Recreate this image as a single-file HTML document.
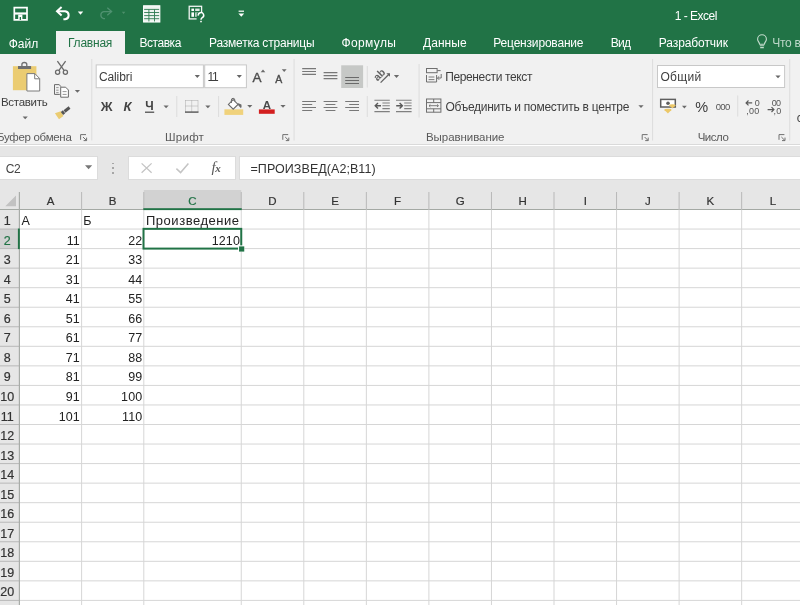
<!DOCTYPE html>
<html lang="ru"><head><meta charset="utf-8"><title>1 - Excel</title>
<style>
html,body{margin:0;padding:0}
body{width:800px;height:605px;overflow:hidden;position:relative;background:#fff;font-family:"Liberation Sans",sans-serif;}
div,span,svg{position:absolute;box-sizing:border-box}
.t{white-space:nowrap;line-height:1;display:block}
</style></head><body>
<div id="root" style="left:0;top:0;width:800px;height:605px;overflow:hidden;will-change:transform">

<div style="left:0;top:0;width:800px;height:54.3px;background:#217346"></div>
<div style="left:0;top:54.3px;width:800px;height:90px;background:#f1f1f1"></div>
<div style="left:0;top:143.8px;width:800px;height:1.7px;background:#dadada"></div>
<div style="left:0;top:145.5px;width:800px;height:64px;background:#e6e6e6"></div>
<div style="left:55.8px;top:31px;width:69.4px;height:25px;background:#f1f1f1"></div>
<svg style="left:0;top:0" width="800" height="55" viewBox="0 0 800 55" fill="none" stroke-linecap="butt">
<!-- save -->
<path d="M14.3 7.6 H27 V19.9 H14.3 Z" stroke="#fff" stroke-width="1.7"/>
<rect x="14.3" y="12.4" width="12.7" height="2.2" fill="#fff"/>
<rect x="18.2" y="14.6" width="4.2" height="5.3" fill="#fff"/>
<rect x="19.7" y="17" width="1.3" height="2.9" fill="#217346"/>
<!-- undo -->
<path d="M61.6 6.9 L57 11.2 L61.6 15.4" stroke="#fff" stroke-width="2"/>
<path d="M57.4 11.2 H65.2 A4.1 4.1 0 0 1 65.2 19.3 H63.4" stroke="#fff" stroke-width="2"/>
<path d="M77.8 11.6 h5.4 l-2.7 3.2 z" fill="#fff"/>
<!-- redo (disabled) -->
<path d="M107.3 7.8 L111.6 11.6 L107.3 15.2" stroke="#4f9170" stroke-width="1.3"/>
<path d="M111.4 11.6 H103.6 A3.6 3.6 0 0 0 103.6 18.6 H105" stroke="#4f9170" stroke-width="1.3"/>
<path d="M121.8 11.8 h3.6 l-1.8 2.2 z" fill="#4d8f6b"/>
<!-- table -->
<rect x="143.6" y="5.8" width="16.2" height="16.2" fill="#eef4f0"/>
<path d="M143.6 9.4 H159.8 M143.6 12.5 H159.8 M143.6 15.6 H159.8 M143.6 18.7 H159.8 M148.9 9.4 V22 M154.5 9.4 V22" stroke="#2d7a50" stroke-width="0.9"/>
<rect x="143.6" y="5.8" width="16.2" height="16.2" stroke="#fff" stroke-width="1.1"/>
<!-- form -->
<rect x="189.2" y="6.3" width="12.4" height="12.6" stroke="#f0f5f2" stroke-width="1.3"/>
<rect x="191.4" y="8.6" width="2.6" height="2.4" fill="#fff"/><rect x="195.2" y="8.6" width="4.4" height="2.4" fill="#dfeae3"/>
<rect x="191.4" y="12.4" width="2.6" height="4.4" fill="#fff"/><rect x="195.2" y="12.4" width="3" height="4.4" fill="#dfeae3"/>
<rect x="196.6" y="12.6" width="9" height="10" fill="#217346"/>
<path d="M198.3 15.6 A2.7 2.7 0 1 1 202.6 17.4 Q201 18.4 201 19.8" stroke="#fff" stroke-width="1.5"/>
<rect x="200.2" y="20.8" width="1.6" height="1.5" fill="#fff"/>
<!-- customize -->
<rect x="238.6" y="10.6" width="5.4" height="1.2" fill="#fff"/>
<path d="M238.4 13.4 h5.8 l-2.9 3.3 z" fill="#fff"/>
<!-- bulb -->
<path d="M759.6 44.2 C759.4 42.2 757.6 41.4 757.6 39.2 A4.4 4.4 0 0 1 766.4 39.2 C766.4 41.4 764.6 42.2 764.4 44.2 Z" stroke="#c3dccd" stroke-width="1.1"/>
<path d="M759.8 45.8 H764.2 M760.2 47.6 H763.8" stroke="#c3dccd" stroke-width="1.1"/>
</svg>

<svg style="left:0;top:55px" width="800" height="90" viewBox="0 55 800 90" fill="none">
<!-- group separators -->
<g fill="#dcdcdc">
<rect x="91.3" y="59" width="1" height="81.5"/><rect x="293.6" y="59" width="1" height="81.5"/>
<rect x="652.1" y="59" width="1" height="81.5"/><rect x="789.2" y="59" width="1" height="81.5"/>
<rect x="418.6" y="64" width="1" height="53.5"/>
<rect x="176.3" y="96" width="1" height="21"/><rect x="218.1" y="96" width="1" height="21"/>
<rect x="366.8" y="66" width="1" height="21.5"/><rect x="366.8" y="96" width="1" height="21"/>
<rect x="737.2" y="95.5" width="1" height="21"/>
</g>
<!-- paste -->
<rect x="12.9" y="66.2" width="23.5" height="24" fill="#ebcc72"/>
<rect x="18" y="66" width="13.1" height="3" fill="#6f6f6f"/>
<path d="M21.9 66.4 V64.6 A2.45 2.1 0 0 1 26.8 64.6 V66.4" stroke="#6f6f6f" stroke-width="1.3"/>
<path d="M26.9 73.6 H34.9 L39.7 78.6 V91 H26.9 Z" fill="#fff" stroke="#7a7a7a" stroke-width="1"/>
<path d="M34.7 73.8 V78.8 H39.6" stroke="#7a7a7a" stroke-width="1"/>
<path d="M22.6 116.5 h5.2 l-2.6 2.8 z" fill="#6a6a6a"/>
<!-- scissors -->
<g stroke="#6a6a6a" stroke-width="1.3">
<path d="M57.4 61.2 L64.2 70.6 M65.6 61.2 L58.8 70.6"/>
<circle cx="57.6" cy="72.2" r="2.1"/><circle cx="65.4" cy="72.2" r="2.1"/>
</g>
<!-- copy -->
<g stroke="#6a6a6a" stroke-width="1">
<path d="M59.8 94.4 H54.5 V84.6 H59 L61.3 86.8" />
<path d="M60.7 87.2 H65.6 L68.4 90 V97.2 H60.7 Z" fill="#fff"/>
<path d="M56.2 87.6 H58.6 M56.2 90.2 H58.6 M56.2 92.6 H58.6 M62.6 91.6 H66.6 M62.6 94.4 H66.6" stroke="#8a8a8a" stroke-width="0.9"/>
</g>
<path d="M74.8 90 h5.2 l-2.6 2.8 z" fill="#6a6a6a"/>
<!-- format painter -->
<path d="M54.9 113.2 L60.8 111.2 L63.4 116 L59 119.2 Z" fill="#ebcc72"/>
<g transform="translate(65.6 110.6) rotate(-38)">
<rect x="-4.6" y="-1.9" width="2.6" height="3.8" fill="#555"/>
<rect x="-1.4" y="-1.5" width="6.4" height="3" fill="#555"/>
</g>
<!-- launchers -->
<g stroke="#707070" stroke-width="1" transform="translate(0.0 0)"><path d="M86 134.6 H80.6 V139.8"/><path d="M83 137 L86.4 140.4 M86.6 137.6 V140.6 H83.6"/></g>
<g stroke="#707070" stroke-width="1" transform="translate(202.2 0)"><path d="M86 134.6 H80.6 V139.8"/><path d="M83 137 L86.4 140.4 M86.6 137.6 V140.6 H83.6"/></g>
<g stroke="#707070" stroke-width="1" transform="translate(561.6 0)"><path d="M86 134.6 H80.6 V139.8"/><path d="M83 137 L86.4 140.4 M86.6 137.6 V140.6 H83.6"/></g>
<g stroke="#707070" stroke-width="1" transform="translate(698.4 0)"><path d="M86 134.6 H80.6 V139.8"/><path d="M83 137 L86.4 140.4 M86.6 137.6 V140.6 H83.6"/></g>
<!-- font combos -->
<rect x="96.2" y="64.9" width="107.2" height="22.8" fill="#fff" stroke="#c8c8c8" stroke-width="1"/>
<rect x="204.7" y="64.9" width="41.7" height="22.8" fill="#fff" stroke="#c8c8c8" stroke-width="1"/>
<path d="M194.7 75.1 h5.2 l-2.6 2.8 z M236.7 75.1 h5.2 l-2.6 2.8 z" fill="#666"/>
<!-- grow/shrink arrows -->
<path d="M260.7 72.3 h4.6 l-2.3 -2.8 z" fill="#6a6a6a"/>
<path d="M281.8 69.2 h4.8 l-2.4 2.8 z" fill="#6a6a6a"/>
<!-- underline for Ч + arrow -->
<rect x="145" y="111.6" width="9.2" height="1.2" fill="#444"/>
<path d="M163.5 105.4 h5.2 l-2.6 2.8 z" fill="#6a6a6a"/>
<!-- borders icon -->
<g stroke="#a8a8a8" stroke-width="1" stroke-dasharray="1 1">
<path d="M185.5 100.5 H198 M185.5 100.5 V112 M198 100.5 V112 M191.7 100.5 V112 M185.5 106 H198"/>
</g>
<rect x="185" y="111.4" width="13.5" height="1.4" fill="#555"/>
<path d="M205.3 105.4 h5.2 l-2.6 2.8 z" fill="#6a6a6a"/>
<!-- fill bucket -->
<rect x="224.4" y="109.3" width="18.8" height="5.6" fill="#f0d27c"/>
<path d="M233.2 99.6 L238 104.4 L233.2 109.2 L228.4 104.4 Z" fill="#fff" stroke="#6a6a6a" stroke-width="1.1"/>
<path d="M231.4 103 V100 A1.7 1.7 0 0 1 234.8 100 V101.2" stroke="#6a6a6a" stroke-width="1"/>
<path d="M237.6 103 L241.4 104.6 Q242 106.6 241 108.2 L238.4 105.6 Z" fill="#6a6a6a"/>
<path d="M247.2 105 h5.2 l-2.6 2.8 z" fill="#6a6a6a"/>
<!-- font color -->
<rect x="258.9" y="109.4" width="15.8" height="4.4" fill="#d31f1f"/>
<path d="M280.4 105 h5.2 l-2.6 2.8 z" fill="#6a6a6a"/>
<!-- align: top row -->
<g stroke="#787878" stroke-width="1.1">
<path d="M302.2 68.6 H316 M302.2 71.5 H316 M302.2 74.4 H316"/>
<path d="M323.6 72.6 H337.4 M323.6 75.6 H337.4 M323.6 78.6 H337.4"/>
</g>
<rect x="341.2" y="65.3" width="21.9" height="22.7" fill="#c6c8c6"/>
<path d="M345.2 77.5 H359 M345.2 80.5 H359 M345.2 83.5 H359" stroke="#6a6a6a" stroke-width="1.1"/>
<!-- align: bottom row -->
<g stroke="#787878" stroke-width="1.1">
<path d="M302.2 101.5 H316 M302.2 104.5 H312.2 M302.2 107.5 H316 M302.2 110.5 H312.2"/>
<path d="M323.6 101.5 H337.4 M325.6 104.5 H335.4 M323.6 107.5 H337.4 M325.6 110.5 H335.4"/>
<path d="M345.2 101.5 H359 M349.2 104.5 H359 M345.2 107.5 H359 M349.2 110.5 H359"/>
</g>
<!-- orientation -->
<g transform="translate(379.6 75.2) rotate(-45)">
<text x="-6" y="3" font-family="Liberation Sans, sans-serif" font-size="10.5" font-weight="bold" fill="#636363">ab</text>
</g>
<path d="M380.6 82.6 L389.2 74" stroke="#636363" stroke-width="1.3"/>
<path d="M386.4 73.2 H390 V76.8 Z" fill="#636363"/>
<path d="M393.9 75.1 h5.2 l-2.6 2.8 z" fill="#6a6a6a"/>
<!-- indents -->
<g stroke="#808080" stroke-width="1.1">
<path d="M374.4 100.2 H389.8 M382.4 103 H389.8 M382.4 105.8 H389.8 M382.4 108.6 H389.8 M374.4 111.6 H389.8"/>
<path d="M396 100.2 H411.6 M404.2 103 H411.6 M404.2 105.8 H411.6 M404.2 108.6 H411.6 M396 111.6 H411.6"/>
</g>
<g stroke="#5a5a5a" stroke-width="1.4">
<path d="M375.2 105.8 H381 M378 103 L375.2 105.8 L378 108.6"/>
<path d="M396.2 105.8 H402.4 M399.6 103 L402.4 105.8 L399.6 108.6"/>
</g>
<!-- wrap text -->
<g stroke="#6f6f6f" stroke-width="1">
<rect x="426.5" y="68.5" width="10.6" height="4.2"/>
<path d="M437.2 70.6 H440.6"/>
<path d="M426.5 75 V82 H436.6 V75"/>
<path d="M428.6 77 H434.4 M428.6 79.6 H434.4" stroke-width="0.9"/>
<path d="M441.2 74 V78 H437.6 M439.2 76.4 L437.4 78 L439.2 79.8" />
</g>
<!-- merge -->
<g stroke="#6f6f6f" stroke-width="1">
<rect x="426.5" y="99" width="14.4" height="13.2"/>
<path d="M426.5 102.6 H441 M426.5 108.8 H441 M433.7 99 V102.6 M433.7 108.8 V112.2"/>
<path d="M429 105.7 H438.4 M430.4 104.4 L429 105.7 L430.4 107 M437 104.4 L438.4 105.7 L437 107" stroke-width="0.9"/>
</g>
<path d="M638.4 105.2 h5.2 l-2.6 2.8 z" fill="#6a6a6a"/>
<!-- number format combo -->
<rect x="657.5" y="65.5" width="127.1" height="22" fill="#fff" stroke="#c8c8c8" stroke-width="1"/>
<path d="M775.4 75.4 h5.2 l-2.6 2.8 z" fill="#666"/>
<!-- currency -->
<rect x="660.7" y="99.4" width="14.6" height="7.6" fill="#fff" stroke="#5e5e5e" stroke-width="1.5"/>
<circle cx="668" cy="103.2" r="1.8" fill="#5e5e5e"/>
<path d="M669.4 105.2 h6 l-3 3.2 z" fill="#ecc868"/><ellipse cx="672.4" cy="105.4" rx="3.2" ry="1.2" fill="#ecc868"/>
<path d="M664.4 109.8 h7 l-3.5 3.8 z" fill="#ecc868"/><ellipse cx="667.9" cy="110" rx="3.6" ry="1.3" fill="#ecc868"/>
<path d="M682 105.8 h4.8 l-2.4 2.6 z" fill="#6a6a6a"/>
<!-- decimals -->
<g stroke="#5a5a5a" stroke-width="1.2">
<path d="M746 102.9 H752.2 M748.5 100.5 L746.1 102.9 L748.5 105.3"/>
<path d="M767.6 109.6 H773.8 M771.5 107.2 L773.9 109.6 L771.5 112"/>
</g>
</svg>

<div style="left:0;top:155.6px;width:98px;height:24.8px;background:#fff;border:1px solid #dcdcdc;border-left:0"></div>
<svg style="left:80px;top:160px" width="20" height="14" viewBox="80 160 20 14"><path d="M85 165.2 h7.2 l-3.6 4 z" fill="#777"/></svg>
<div style="left:112.3px;top:162.5px;width:1.5px;height:1.5px;background:#a6a6a6"></div>
<div style="left:112.3px;top:167.4px;width:1.5px;height:1.5px;background:#a6a6a6"></div>
<div style="left:112.3px;top:172.3px;width:1.5px;height:1.5px;background:#a6a6a6"></div>
<div style="left:128.2px;top:155.6px;width:107.8px;height:24.8px;background:#fff;border:1px solid #dcdcdc"></div>
<div style="left:239px;top:155.6px;width:570px;height:24.8px;background:#fff;border:1px solid #dcdcdc"></div>
<svg style="left:0;top:150px" width="800" height="40" viewBox="0 150 800 40" fill="none">
<path d="M141.6 163.4 L151.6 172.8 M151.6 163.4 L141.6 172.8" stroke="#c4c4c4" stroke-width="1.3"/>
<path d="M176.4 168.6 L180.6 172.6 L188.4 163.6" stroke="#c4c4c4" stroke-width="1.5"/>
</svg>
<span class="t" style="left:211.6px;top:160px;font-family:'Liberation Serif',serif;font-style:italic;font-size:15px;color:#5a5a5a;letter-spacing:0px">f<span style="position:static;font-size:11px;font-weight:bold;margin-left:-0.5px">x</span></span>

<svg style="left:0;top:0" width="800" height="605" viewBox="0 0 800 605">
<rect x="143.80" y="190" width="97.45" height="19.5" fill="#d2d2d2"/>
<rect x="0" y="209.50" width="19.4" height="400" fill="#e6e6e6"/>
<rect x="0" y="229.05" width="19.4" height="19.55" fill="#d2d2d2"/>
<rect x="0" y="209.00" width="800" height="1" fill="#a4a9a4"/>
<rect x="19.4" y="228.55" width="800" height="1" fill="#d6d6d6"/>
<rect x="0" y="228.55" width="19.4" height="1" fill="#b8b8b8"/>
<rect x="19.4" y="248.09" width="800" height="1" fill="#d6d6d6"/>
<rect x="0" y="248.09" width="19.4" height="1" fill="#b8b8b8"/>
<rect x="19.4" y="267.63" width="800" height="1" fill="#d6d6d6"/>
<rect x="0" y="267.63" width="19.4" height="1" fill="#b8b8b8"/>
<rect x="19.4" y="287.18" width="800" height="1" fill="#d6d6d6"/>
<rect x="0" y="287.18" width="19.4" height="1" fill="#b8b8b8"/>
<rect x="19.4" y="306.73" width="800" height="1" fill="#d6d6d6"/>
<rect x="0" y="306.73" width="19.4" height="1" fill="#b8b8b8"/>
<rect x="19.4" y="326.27" width="800" height="1" fill="#d6d6d6"/>
<rect x="0" y="326.27" width="19.4" height="1" fill="#b8b8b8"/>
<rect x="19.4" y="345.81" width="800" height="1" fill="#d6d6d6"/>
<rect x="0" y="345.81" width="19.4" height="1" fill="#b8b8b8"/>
<rect x="19.4" y="365.36" width="800" height="1" fill="#d6d6d6"/>
<rect x="0" y="365.36" width="19.4" height="1" fill="#b8b8b8"/>
<rect x="19.4" y="384.91" width="800" height="1" fill="#d6d6d6"/>
<rect x="0" y="384.91" width="19.4" height="1" fill="#b8b8b8"/>
<rect x="19.4" y="404.45" width="800" height="1" fill="#d6d6d6"/>
<rect x="0" y="404.45" width="19.4" height="1" fill="#b8b8b8"/>
<rect x="19.4" y="424.00" width="800" height="1" fill="#d6d6d6"/>
<rect x="0" y="424.00" width="19.4" height="1" fill="#b8b8b8"/>
<rect x="19.4" y="443.54" width="800" height="1" fill="#d6d6d6"/>
<rect x="0" y="443.54" width="19.4" height="1" fill="#b8b8b8"/>
<rect x="19.4" y="463.09" width="800" height="1" fill="#d6d6d6"/>
<rect x="0" y="463.09" width="19.4" height="1" fill="#b8b8b8"/>
<rect x="19.4" y="482.63" width="800" height="1" fill="#d6d6d6"/>
<rect x="0" y="482.63" width="19.4" height="1" fill="#b8b8b8"/>
<rect x="19.4" y="502.18" width="800" height="1" fill="#d6d6d6"/>
<rect x="0" y="502.18" width="19.4" height="1" fill="#b8b8b8"/>
<rect x="19.4" y="521.72" width="800" height="1" fill="#d6d6d6"/>
<rect x="0" y="521.72" width="19.4" height="1" fill="#b8b8b8"/>
<rect x="19.4" y="541.27" width="800" height="1" fill="#d6d6d6"/>
<rect x="0" y="541.27" width="19.4" height="1" fill="#b8b8b8"/>
<rect x="19.4" y="560.81" width="800" height="1" fill="#d6d6d6"/>
<rect x="0" y="560.81" width="19.4" height="1" fill="#b8b8b8"/>
<rect x="19.4" y="580.36" width="800" height="1" fill="#d6d6d6"/>
<rect x="0" y="580.36" width="19.4" height="1" fill="#b8b8b8"/>
<rect x="19.4" y="599.90" width="800" height="1" fill="#d6d6d6"/>
<rect x="0" y="599.90" width="19.4" height="1" fill="#b8b8b8"/>
<rect x="81.10" y="209.50" width="1" height="400" fill="#d6d6d6"/>
<rect x="81.10" y="192" width="1" height="17.5" fill="#b8b8b8"/>
<rect x="143.30" y="209.50" width="1" height="400" fill="#d6d6d6"/>
<rect x="143.30" y="192" width="1" height="17.5" fill="#b8b8b8"/>
<rect x="240.75" y="209.50" width="1" height="400" fill="#d6d6d6"/>
<rect x="240.75" y="192" width="1" height="17.5" fill="#b8b8b8"/>
<rect x="303.30" y="209.50" width="1" height="400" fill="#d6d6d6"/>
<rect x="303.30" y="192" width="1" height="17.5" fill="#b8b8b8"/>
<rect x="365.85" y="209.50" width="1" height="400" fill="#d6d6d6"/>
<rect x="365.85" y="192" width="1" height="17.5" fill="#b8b8b8"/>
<rect x="428.40" y="209.50" width="1" height="400" fill="#d6d6d6"/>
<rect x="428.40" y="192" width="1" height="17.5" fill="#b8b8b8"/>
<rect x="490.95" y="209.50" width="1" height="400" fill="#d6d6d6"/>
<rect x="490.95" y="192" width="1" height="17.5" fill="#b8b8b8"/>
<rect x="553.50" y="209.50" width="1" height="400" fill="#d6d6d6"/>
<rect x="553.50" y="192" width="1" height="17.5" fill="#b8b8b8"/>
<rect x="616.05" y="209.50" width="1" height="400" fill="#d6d6d6"/>
<rect x="616.05" y="192" width="1" height="17.5" fill="#b8b8b8"/>
<rect x="678.60" y="209.50" width="1" height="400" fill="#d6d6d6"/>
<rect x="678.60" y="192" width="1" height="17.5" fill="#b8b8b8"/>
<rect x="741.15" y="209.50" width="1" height="400" fill="#d6d6d6"/>
<rect x="741.15" y="192" width="1" height="17.5" fill="#b8b8b8"/>
<rect x="18.8" y="192" width="1.2" height="420" fill="#a8aca8"/>
<polygon points="16,195.5 16,206.2 5.3,206.2" fill="#c2c2c2"/>
<rect x="143.30" y="208.2" width="98.45" height="1.9" fill="#217346"/>
<rect x="17.9" y="228.55" width="1.9" height="20.55" fill="#217346"/>
<rect x="143.50" y="228.85" width="97.75" height="19.74" fill="none" stroke="#217346" stroke-width="2"/>
<rect x="238.05" y="245.39" width="6.4" height="6.4" fill="#fff"/>
<rect x="239.05" y="246.39" width="5.2" height="5.2" fill="#217346"/>
</svg>
<span class="t" id="tab0" style="left:8.70px;top:38.00px;font-size:12px;color:#fff;letter-spacing:-0.015px;">Файл</span>
<span class="t" id="tab1" style="left:68.00px;top:37.00px;font-size:12px;color:#217346;letter-spacing:-0.218px;">Главная</span>
<span class="t" id="tab2" style="left:139.50px;top:37.00px;font-size:12px;color:#fff;letter-spacing:-0.458px;">Вставка</span>
<span class="t" id="tab3" style="left:209.00px;top:37.00px;font-size:12px;color:#fff;letter-spacing:-0.203px;">Разметка страницы</span>
<span class="t" id="tab4" style="left:341.55px;top:37.00px;font-size:12px;color:#fff;letter-spacing:0.351px;">Формулы</span>
<span class="t" id="tab5" style="left:423.00px;top:37.00px;font-size:12px;color:#fff;letter-spacing:0.050px;">Данные</span>
<span class="t" id="tab6" style="left:493.30px;top:37.00px;font-size:12px;color:#fff;letter-spacing:-0.186px;">Рецензирование</span>
<span class="t" id="tab7" style="left:610.80px;top:37.00px;font-size:12px;color:#fff;letter-spacing:-0.700px;">Вид</span>
<span class="t" id="tab8" style="left:658.80px;top:37.00px;font-size:12px;color:#fff;letter-spacing:-0.090px;">Разработчик</span>
<span class="t" id="tab9" style="left:772.30px;top:37.00px;font-size:12px;color:#bcd7c8;letter-spacing:-0.300px;">Что вы</span>
<span class="t" id="title" style="left:674.80px;top:10.00px;font-size:12px;color:#fff;letter-spacing:-0.517px;">1 - Excel</span>
<span class="t" id="paste" style="left:0.95px;top:97.00px;font-size:11.5px;color:#3e3e3e;letter-spacing:-0.277px;">Вставить</span>
<span class="t" id="g1" style="left:-3.05px;top:132.00px;font-size:11.5px;color:#5a5a5a;letter-spacing:-0.300px;">Буфер обмена</span>
<span class="t" id="g2" style="left:165.00px;top:132.00px;font-size:11.5px;color:#5a5a5a;letter-spacing:0.261px;">Шрифт</span>
<span class="t" id="g3" style="left:426.00px;top:132.00px;font-size:11.5px;color:#5a5a5a;letter-spacing:-0.068px;">Выравнивание</span>
<span class="t" id="g4" style="left:697.65px;top:132.00px;font-size:11.5px;color:#5a5a5a;letter-spacing:-0.459px;">Число</span>
<span class="t" id="calibri" style="left:98.90px;top:71.00px;font-size:12px;color:#3e3e3e;letter-spacing:-0.093px;">Calibri</span>
<span class="t" id="fs11" style="left:207.60px;top:71.00px;font-size:12px;color:#3e3e3e;letter-spacing:-1.450px;">11</span>
<span class="t" id="wrap" style="left:445.15px;top:71.00px;font-size:12px;color:#3e3e3e;letter-spacing:-0.359px;">Перенести текст</span>
<span class="t" id="merge" style="left:445.40px;top:101.00px;font-size:12px;color:#3e3e3e;letter-spacing:-0.264px;">Объединить и поместить в центре</span>
<span class="t" id="numfmt" style="left:660.40px;top:71.00px;font-size:12px;color:#3e3e3e;letter-spacing:0.327px;">Общий</span>
<span class="t" id="bB" style="left:100.70px;top:100.00px;font-size:13px;color:#444;font-weight:bold;">Ж</span>
<span class="t" id="bI" style="left:123.40px;top:100.00px;font-size:13px;color:#444;font-weight:bold;font-style:italic;">К</span>
<span class="t" id="bU" style="left:145.20px;top:100.00px;font-size:12px;color:#444;font-weight:bold;">Ч</span>
<span class="t" id="pct" style="left:695.35px;top:100.00px;font-size:14.5px;color:#3c3c3c;">%</span>
<span class="t" id="k000" style="left:715.65px;top:102.00px;font-size:9.5px;color:#555;letter-spacing:-0.600px;">000</span>
<span class="t" id="d1a" style="left:754.65px;top:99.00px;font-size:9px;color:#555;">0</span>
<span class="t" id="d1b" style="left:746.25px;top:107.00px;font-size:9px;color:#555;letter-spacing:0.300px;">,00</span>
<span class="t" id="d2a" style="left:771.75px;top:99.00px;font-size:9px;color:#555;letter-spacing:-0.800px;">00</span>
<span class="t" id="d2b" style="left:773.45px;top:107.00px;font-size:9px;color:#555;letter-spacing:0.250px;">,0</span>
<span class="t" id="gA" style="left:252.60px;top:71.00px;font-size:13.5px;color:#4a4a4a;-webkit-text-stroke:0.35px #4a4a4a;">A</span>
<span class="t" id="sA" style="left:275.30px;top:74.00px;font-size:10.5px;color:#4a4a4a;-webkit-text-stroke:0.35px #4a4a4a;">A</span>
<span class="t" id="fA" style="left:262.65px;top:100.00px;font-size:11.5px;color:#4a4a4a;font-weight:bold;">A</span>
<span class="t" id="cut" style="left:796.70px;top:112.00px;font-size:12px;color:#444;letter-spacing:-0.300px;">с</span>
<span class="t" id="nb" style="left:5.75px;top:163.00px;font-size:12px;color:#444;letter-spacing:-0.500px;">C2</span>
<span class="t" id="formula" style="left:250.50px;top:163.00px;font-size:12.5px;color:#333;letter-spacing:0.062px;">=ПРОИЗВЕД(A2;B11)</span>
<span class="t" id="chA" style="left:30.50px;top:196.00px;width:40px;text-align:center;font-size:11.5px;color:#333;-webkit-text-stroke:0.2px #333;">A</span>
<span class="t" id="chB" style="left:92.70px;top:196.00px;width:40px;text-align:center;font-size:11.5px;color:#333;-webkit-text-stroke:0.2px #333;">B</span>
<span class="t" id="chC" style="left:172.53px;top:196.00px;width:40px;text-align:center;font-size:11.5px;color:#217346;-webkit-text-stroke:0.2px #217346;">C</span>
<span class="t" id="chD" style="left:252.52px;top:196.00px;width:40px;text-align:center;font-size:11.5px;color:#333;-webkit-text-stroke:0.2px #333;">D</span>
<span class="t" id="chE" style="left:315.08px;top:196.00px;width:40px;text-align:center;font-size:11.5px;color:#333;-webkit-text-stroke:0.2px #333;">E</span>
<span class="t" id="chF" style="left:377.62px;top:196.00px;width:40px;text-align:center;font-size:11.5px;color:#333;-webkit-text-stroke:0.2px #333;">F</span>
<span class="t" id="chG" style="left:440.17px;top:196.00px;width:40px;text-align:center;font-size:11.5px;color:#333;-webkit-text-stroke:0.2px #333;">G</span>
<span class="t" id="chH" style="left:502.73px;top:196.00px;width:40px;text-align:center;font-size:11.5px;color:#333;-webkit-text-stroke:0.2px #333;">H</span>
<span class="t" id="chI" style="left:565.27px;top:196.00px;width:40px;text-align:center;font-size:11.5px;color:#333;-webkit-text-stroke:0.2px #333;">I</span>
<span class="t" id="chJ" style="left:627.83px;top:196.00px;width:40px;text-align:center;font-size:11.5px;color:#333;-webkit-text-stroke:0.2px #333;">J</span>
<span class="t" id="chK" style="left:690.38px;top:196.00px;width:40px;text-align:center;font-size:11.5px;color:#333;-webkit-text-stroke:0.2px #333;">K</span>
<span class="t" id="chL" style="left:752.92px;top:196.00px;width:40px;text-align:center;font-size:11.5px;color:#333;-webkit-text-stroke:0.2px #333;">L</span>
<span class="t" id="rh1" style="left:-12.70px;top:215.00px;width:40px;text-align:center;font-size:12.5px;color:#333;-webkit-text-stroke:0.2px #333;">1</span>
<span class="t" id="rh2" style="left:-12.70px;top:235.00px;width:40px;text-align:center;font-size:12.5px;color:#217346;-webkit-text-stroke:0.2px #217346;">2</span>
<span class="t" id="rh3" style="left:-12.70px;top:254.00px;width:40px;text-align:center;font-size:12.5px;color:#333;-webkit-text-stroke:0.2px #333;">3</span>
<span class="t" id="rh4" style="left:-12.70px;top:274.00px;width:40px;text-align:center;font-size:12.5px;color:#333;-webkit-text-stroke:0.2px #333;">4</span>
<span class="t" id="rh5" style="left:-12.70px;top:293.00px;width:40px;text-align:center;font-size:12.5px;color:#333;-webkit-text-stroke:0.2px #333;">5</span>
<span class="t" id="rh6" style="left:-12.70px;top:313.00px;width:40px;text-align:center;font-size:12.5px;color:#333;-webkit-text-stroke:0.2px #333;">6</span>
<span class="t" id="rh7" style="left:-12.70px;top:332.00px;width:40px;text-align:center;font-size:12.5px;color:#333;-webkit-text-stroke:0.2px #333;">7</span>
<span class="t" id="rh8" style="left:-12.70px;top:352.00px;width:40px;text-align:center;font-size:12.5px;color:#333;-webkit-text-stroke:0.2px #333;">8</span>
<span class="t" id="rh9" style="left:-12.70px;top:371.00px;width:40px;text-align:center;font-size:12.5px;color:#333;-webkit-text-stroke:0.2px #333;">9</span>
<span class="t" id="rh10" style="left:-12.70px;top:391.00px;width:40px;text-align:center;font-size:12.5px;color:#333;-webkit-text-stroke:0.2px #333;">10</span>
<span class="t" id="rh11" style="left:-12.70px;top:411.00px;width:40px;text-align:center;font-size:12.5px;color:#333;-webkit-text-stroke:0.2px #333;">11</span>
<span class="t" id="rh12" style="left:-12.70px;top:430.00px;width:40px;text-align:center;font-size:12.5px;color:#333;-webkit-text-stroke:0.2px #333;">12</span>
<span class="t" id="rh13" style="left:-12.70px;top:450.00px;width:40px;text-align:center;font-size:12.5px;color:#333;-webkit-text-stroke:0.2px #333;">13</span>
<span class="t" id="rh14" style="left:-12.70px;top:469.00px;width:40px;text-align:center;font-size:12.5px;color:#333;-webkit-text-stroke:0.2px #333;">14</span>
<span class="t" id="rh15" style="left:-12.70px;top:489.00px;width:40px;text-align:center;font-size:12.5px;color:#333;-webkit-text-stroke:0.2px #333;">15</span>
<span class="t" id="rh16" style="left:-12.70px;top:508.00px;width:40px;text-align:center;font-size:12.5px;color:#333;-webkit-text-stroke:0.2px #333;">16</span>
<span class="t" id="rh17" style="left:-12.70px;top:528.00px;width:40px;text-align:center;font-size:12.5px;color:#333;-webkit-text-stroke:0.2px #333;">17</span>
<span class="t" id="rh18" style="left:-12.70px;top:547.00px;width:40px;text-align:center;font-size:12.5px;color:#333;-webkit-text-stroke:0.2px #333;">18</span>
<span class="t" id="rh19" style="left:-12.70px;top:567.00px;width:40px;text-align:center;font-size:12.5px;color:#333;-webkit-text-stroke:0.2px #333;">19</span>
<span class="t" id="rh20" style="left:-12.70px;top:586.00px;width:40px;text-align:center;font-size:12.5px;color:#333;-webkit-text-stroke:0.2px #333;">20</span>
<span class="t" id="cA1" style="left:21.40px;top:215.00px;font-size:12.5px;color:#222;">А</span>
<span class="t" id="cB1" style="left:83.35px;top:215.00px;font-size:12.5px;color:#222;">Б</span>
<span class="t" id="cC1" style="left:146.00px;top:214.00px;font-size:13px;color:#222;letter-spacing:0.523px;">Произведение</span>
<span class="t" id="cA2" style="left:19.90px;top:235.00px;width:60px;text-align:right;font-size:12.5px;color:#222;letter-spacing:0.12px;">11</span>
<span class="t" id="cB2" style="left:82.30px;top:235.00px;width:60px;text-align:right;font-size:12.5px;color:#222;letter-spacing:0.12px;">22</span>
<span class="t" id="cA3" style="left:19.90px;top:254.00px;width:60px;text-align:right;font-size:12.5px;color:#222;letter-spacing:0.12px;">21</span>
<span class="t" id="cB3" style="left:82.30px;top:254.00px;width:60px;text-align:right;font-size:12.5px;color:#222;letter-spacing:0.12px;">33</span>
<span class="t" id="cA4" style="left:19.90px;top:274.00px;width:60px;text-align:right;font-size:12.5px;color:#222;letter-spacing:0.12px;">31</span>
<span class="t" id="cB4" style="left:82.30px;top:274.00px;width:60px;text-align:right;font-size:12.5px;color:#222;letter-spacing:0.12px;">44</span>
<span class="t" id="cA5" style="left:19.90px;top:293.00px;width:60px;text-align:right;font-size:12.5px;color:#222;letter-spacing:0.12px;">41</span>
<span class="t" id="cB5" style="left:82.30px;top:293.00px;width:60px;text-align:right;font-size:12.5px;color:#222;letter-spacing:0.12px;">55</span>
<span class="t" id="cA6" style="left:19.90px;top:313.00px;width:60px;text-align:right;font-size:12.5px;color:#222;letter-spacing:0.12px;">51</span>
<span class="t" id="cB6" style="left:82.30px;top:313.00px;width:60px;text-align:right;font-size:12.5px;color:#222;letter-spacing:0.12px;">66</span>
<span class="t" id="cA7" style="left:19.90px;top:332.00px;width:60px;text-align:right;font-size:12.5px;color:#222;letter-spacing:0.12px;">61</span>
<span class="t" id="cB7" style="left:82.30px;top:332.00px;width:60px;text-align:right;font-size:12.5px;color:#222;letter-spacing:0.12px;">77</span>
<span class="t" id="cA8" style="left:19.90px;top:352.00px;width:60px;text-align:right;font-size:12.5px;color:#222;letter-spacing:0.12px;">71</span>
<span class="t" id="cB8" style="left:82.30px;top:352.00px;width:60px;text-align:right;font-size:12.5px;color:#222;letter-spacing:0.12px;">88</span>
<span class="t" id="cA9" style="left:19.90px;top:371.00px;width:60px;text-align:right;font-size:12.5px;color:#222;letter-spacing:0.12px;">81</span>
<span class="t" id="cB9" style="left:82.30px;top:371.00px;width:60px;text-align:right;font-size:12.5px;color:#222;letter-spacing:0.12px;">99</span>
<span class="t" id="cA10" style="left:19.90px;top:391.00px;width:60px;text-align:right;font-size:12.5px;color:#222;letter-spacing:0.12px;">91</span>
<span class="t" id="cB10" style="left:82.30px;top:391.00px;width:60px;text-align:right;font-size:12.5px;color:#222;letter-spacing:0.12px;">100</span>
<span class="t" id="cA11" style="left:19.90px;top:411.00px;width:60px;text-align:right;font-size:12.5px;color:#222;letter-spacing:0.12px;">101</span>
<span class="t" id="cB11" style="left:82.30px;top:411.00px;width:60px;text-align:right;font-size:12.5px;color:#222;letter-spacing:0.12px;">110</span>
<span class="t" id="cC2" style="left:180.00px;top:235.00px;width:60px;text-align:right;font-size:12.5px;color:#222;letter-spacing:0.12px;">1210</span>
</div>
</body></html>
